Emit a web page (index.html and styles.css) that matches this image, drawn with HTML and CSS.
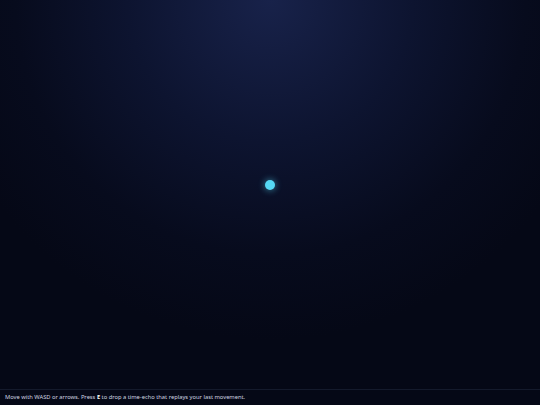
FILE: index.html
```html
<!DOCTYPE html>
<html>
<head>
<meta charset="utf-8">
<link rel="stylesheet" href="styles.css">
</head>
<body>
<div class="app">
  <div class="stage">
    <div class="player"></div>
  </div>
  <div class="hud">Move with WASD or arrows. Press <b>E</b> to drop a time-echo that replays your last movement.</div>
</div>
</body>
</html>
```
FILE: styles.css
```css
html, body {
  margin: 0;
  padding: 0;
  height: 100%;
  background: #050816;
}
.app {
  width: 540px;
  height: 405px;
  display: flex;
  flex-direction: column;
  background: radial-gradient(circle 340px at 270px 0px, #18224a 0%, #0d1430 42%, #070b1d 75%, #050816 100%);
}
.stage {
  flex: 1;
  position: relative;
}
.player {
  position: absolute;
  left: 265px;
  top: 180px;
  width: 10px;
  height: 10px;
  border-radius: 50%;
  background: #55d8f4;
  box-shadow: 0 0 6px 1px rgba(85, 216, 244, 0.45);
}
.hud {
  height: 15px;
  border-top: 1px solid #141a2c;
  background: #050816;
  color: #d0d5e0;
  font-family: "Noto Sans", sans-serif;
  font-size: 5.75px;
  line-height: 14px;
  padding: 0 5px;
}
.hud b {
  font-weight: 700;
  color: #ffffff;
}
```
